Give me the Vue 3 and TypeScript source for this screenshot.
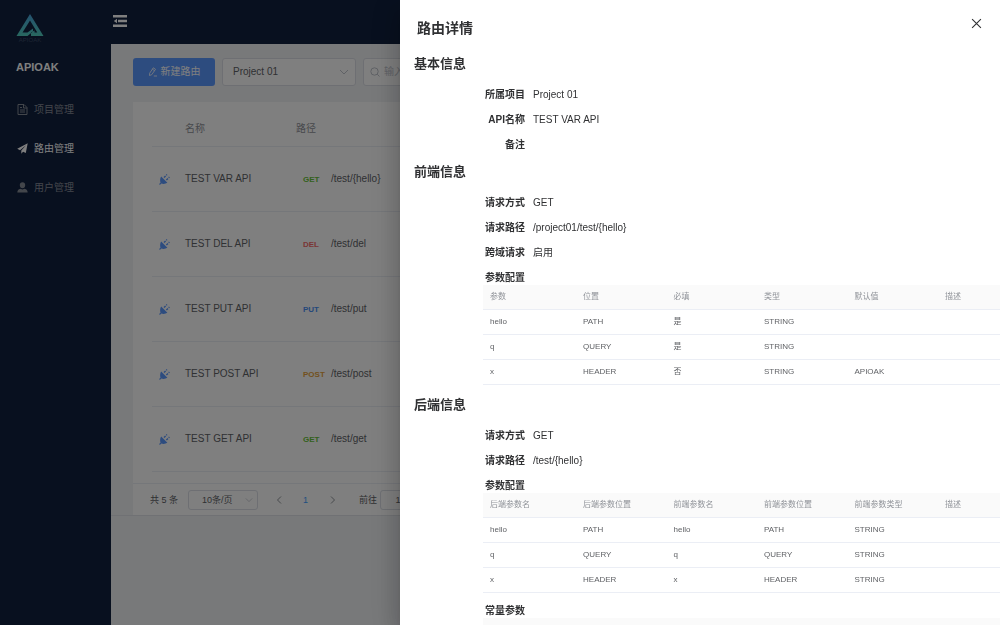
<script setup lang="ts">
import { ref } from 'vue'

interface MenuItem { label: string; icon: 'doc' | 'plane' | 'user'; active: boolean }
interface Route { name: string; method: string; path: string }
interface Field { label: string; value: string }

const menu: MenuItem[] = [
  { label: '项目管理', icon: 'doc', active: false },
  { label: '路由管理', icon: 'plane', active: true },
  { label: '用户管理', icon: 'user', active: false },
]

const routes: Route[] = [
  { name: 'TEST VAR API', method: 'GET', path: '/test/{hello}' },
  { name: 'TEST DEL API', method: 'DEL', path: '/test/del' },
  { name: 'TEST PUT API', method: 'PUT', path: '/test/put' },
  { name: 'TEST POST API', method: 'POST', path: '/test/post' },
  { name: 'TEST GET API', method: 'GET', path: '/test/get' },
]

const basic: Field[] = [
  { label: '所属项目', value: 'Project 01' },
  { label: 'API名称', value: 'TEST VAR API' },
  { label: '备注', value: '' },
]
const front: Field[] = [
  { label: '请求方式', value: 'GET' },
  { label: '请求路径', value: '/project01/test/{hello}' },
  { label: '跨域请求', value: '启用' },
]
const back: Field[] = [
  { label: '请求方式', value: 'GET' },
  { label: '请求路径', value: '/test/{hello}' },
]

const frontHead = ['参数', '位置', '必填', '类型', '默认值', '描述']
const frontRows = [
  ['hello', 'PATH', '是', 'STRING', '', ''],
  ['q', 'QUERY', '是', 'STRING', '', ''],
  ['x', 'HEADER', '否', 'STRING', 'APIOAK', ''],
]
const backHead = ['后端参数名', '后端参数位置', '前端参数名', '前端参数位置', '前端参数类型', '描述']
const backRows = [
  ['hello', 'PATH', 'hello', 'PATH', 'STRING', ''],
  ['q', 'QUERY', 'q', 'QUERY', 'STRING', ''],
  ['x', 'HEADER', 'x', 'HEADER', 'STRING', ''],
]

const project = ref('Project 01')
const pageSize = ref('10条/页')
const jump = ref('1')
const keyword = ref('')
const open = ref(true)
</script>

<template>
  <div class="app">
    <aside class="sidebar">
      <svg class="logo" viewBox="0 0 28 30" aria-hidden="true">
        <defs>
          <linearGradient id="lg" x1="0" y1="0" x2="0" y2="1">
            <stop offset="0" stop-color="#4aa6e0" />
            <stop offset="1" stop-color="#52d0c0" />
          </linearGradient>
        </defs>
        <path
          fill="url(#lg)" fill-rule="evenodd"
          d="M14 1 L27.500 23 H15 V19.500 L18.500 17.500 V19.500 H21.300 L14 7.500 L6.500 19.500 H11.500 L17 15.500 V18.500 L11.500 23 H.5 Z"
        />
        <text x="14" y="29" text-anchor="middle" font-size="6" fill="#3b4b68">APIOAK</text>
      </svg>
      <strong class="brand">APIOAK</strong>
      <nav class="menu">
        <a v-for="m in menu" :key="m.label" href="#" class="menu-item" :class="{ active: m.active }">
          <svg v-if="m.icon === 'doc'" viewBox="0 0 11 11" fill="none" stroke="currentColor">
            <path d="M1 .5 H7 L10 3.500 V10.500 H1 Z M6.500 .5 V4 H10 M3 3.500 H5 M3 6 H8 M3 8 H8" />
          </svg>
          <svg v-else-if="m.icon === 'plane'" viewBox="0 0 11 11" fill="currentColor">
            <path d="M10.700 .3 L.2 5.800 L3 7.200 L9 2.200 L4.300 7.600 V10.800 L6.100 8.700 L8.800 9.900 Z" />
          </svg>
          <svg v-else viewBox="0 0 11 11" fill="currentColor">
            <path d="M5.500 .3 C7.200 .3 8.300 1.600 8.200 3.200 C8.100 4.800 7.200 6.300 5.500 6.300 C3.800 6.300 2.900 4.800 2.800 3.200 C2.700 1.600 3.800 .3 5.500 .3 Z M3.500 6.700 L5.500 7.600 L7.500 6.700 C9.800 7.200 10.600 8.300 10.700 10.600 H.3 C.4 8.300 1.200 7.200 3.500 6.700 Z" />
          </svg>
          <span>{{ m.label }}</span>
        </a>
      </nav>
    </aside>

    <div class="main">
      <header class="topbar">
        <button class="fold" type="button" aria-label="收起菜单">
          <svg viewBox="0 0 14 12" fill="currentColor">
            <path d="M0 0 H14 V2.500 H0 Z M5 4.800 H14 V7.200 H5 Z M0 9.500 H14 V12 H0 Z M.8 6 L4 3.700 V8.300 Z" />
          </svg>
        </button>
      </header>

      <main class="content">
        <div class="toolbar">
          <button class="primary" type="button">
            <svg viewBox="0 0 10 10" fill="none" stroke="currentColor" stroke-width=".8">
              <path d="M1.500 8.500 L1.600 6.300 L5.300 .8 L7.500 2.300 L3.700 7.700 Z M4.400 2.200 L6.500 3.700 M5.800 9 H9" />
            </svg>
            <span>新建路由</span>
          </button>
          <span class="select project">
            <select v-model="project" aria-label="项目"><option>Project 01</option></select>
            <svg viewBox="0 0 10 10" fill="none" stroke="currentColor"><path d="M1 3 L5 7 L9 3" /></svg>
          </span>
          <label class="search">
            <svg viewBox="0 0 10 10" fill="none" stroke="currentColor"><circle cx="4.500" cy="4.500" r="3.700" /><path d="M7.200 7.200 L9.500 9.500" /></svg>
            <input v-model="keyword" type="text" placeholder="输入" aria-label="搜索">
          </label>
        </div>

        <section class="card">
          <table class="routes">
            <thead>
              <tr><th class="c-icon"></th><th class="c-name">名称</th><th>路径</th></tr>
            </thead>
            <tbody>
              <tr v-for="r in routes" :key="r.name">
                <td class="c-icon">
                  <svg viewBox="0 0 11 11" fill="none" stroke="currentColor">
                    <path fill="currentColor" stroke="none" d="M2.200 2.600 L8.400 8.800 C6.800 9.900 4.200 10.200 2.300 9.500 L.9 10.900 L.1 10.100 L1.500 8.700 C.8 6.700 1.100 4.200 2.200 2.600 Z" />
                    <path stroke-width="1.400" d="M5 3.600 L6.600 2 M7.400 6 L9 4.400 M7.300 1.300 L8 .6 M9.700 3.700 L10.400 3" />
                  </svg>
                </td>
                <td class="c-name">{{ r.name }}</td>
                <td><span class="method" :class="r.method.toLowerCase()">{{ r.method }}</span>{{ r.path }}</td>
              </tr>
            </tbody>
          </table>
          <footer class="pager">
            <span>共 5 条</span>
            <span class="select size">
              <select v-model="pageSize" aria-label="每页条数"><option>10条/页</option></select>
              <svg viewBox="0 0 10 10" fill="none" stroke="currentColor"><path d="M1 3 L5 7 L9 3" /></svg>
            </span>
            <button type="button" class="step" aria-label="上一页">
              <svg viewBox="0 0 10 10" fill="none" stroke="currentColor"><path d="M7 1.500 L3.500 5 L7 8.500" /></svg>
            </button>
            <button type="button" class="step current">1</button>
            <button type="button" class="step" aria-label="下一页">
              <svg viewBox="0 0 10 10" fill="none" stroke="currentColor"><path d="M3 1.500 L6.500 5 L3 8.500" /></svg>
            </button>
            <label class="jump">前往<input v-model="jump" type="text"></label>
          </footer>
        </section>
      </main>
    </div>

    <div v-if="open" class="mask">
      <section class="drawer" role="dialog" aria-labelledby="drawer-title">
        <header class="drawer-head">
          <h1 id="drawer-title">路由详情</h1>
          <button type="button" class="close" aria-label="关闭" @click="open = false">
            <svg viewBox="0 0 10 10" fill="none" stroke="currentColor"><path d="M1 1 L9 9 M9 1 L1 9" /></svg>
          </button>
        </header>

        <div class="drawer-body">
          <h2>基本信息</h2>
          <dl v-for="f in basic" :key="f.label" class="field"><dt>{{ f.label }}</dt><dd>{{ f.value }}</dd></dl>

          <h2>前端信息</h2>
          <dl v-for="f in front" :key="f.label" class="field"><dt>{{ f.label }}</dt><dd>{{ f.value }}</dd></dl>
          <h3>参数配置</h3>
          <table class="params">
            <thead><tr><th v-for="h in frontHead" :key="h">{{ h }}</th></tr></thead>
            <tbody>
              <tr v-for="row in frontRows" :key="row[0]"><td v-for="(c, i) in row" :key="i">{{ c }}</td></tr>
            </tbody>
          </table>

          <h2>后端信息</h2>
          <dl v-for="f in back" :key="f.label" class="field"><dt>{{ f.label }}</dt><dd>{{ f.value }}</dd></dl>
          <h3>参数配置</h3>
          <table class="params">
            <thead><tr><th v-for="h in backHead" :key="h">{{ h }}</th></tr></thead>
            <tbody>
              <tr v-for="row in backRows" :key="row[0]"><td v-for="(c, i) in row" :key="i">{{ c }}</td></tr>
            </tbody>
          </table>
          <h3>常量参数</h3>
          <table class="params"><thead><tr><th v-for="n in 6" :key="n"></th></tr></thead></table>
        </div>
      </section>
    </div>
  </div>
</template>

<style>
body {
  margin: 0;
}
</style>

<style scoped>
.app {
  display: flex;
  height: 100vh;
  overflow: hidden;
  font: 10px/14px "Liberation Sans", "Noto Sans CJK SC", sans-serif;
  color: #606266;
}
button, input, select {
  font: inherit;
  color: inherit;
  margin: 0;
  padding: 0;
  border: 0;
  background: none;
}
button {
  cursor: pointer;
}
svg {
  display: block;
  flex: none;
}

.sidebar {
  display: flex;
  flex-direction: column;
  flex: none;
  width: 111px;
  background: #10203e;
}
.logo {
  width: 28px;
  height: 30px;
  margin: 13px 0 0 16px;
}
.brand {
  margin: 17px 0 0 16px;
  font-size: 11px;
  color: #fff;
}
.menu {
  display: flex;
  flex-direction: column;
  margin-top: 16px;
}
.menu-item {
  display: flex;
  align-items: center;
  gap: 6px;
  height: 39px;
  padding-left: 17px;
  color: #878c97;
  text-decoration: none;
}
.menu-item.active {
  color: #fff;
}
.menu-item svg {
  width: 11px;
  height: 11px;
}

.main {
  display: flex;
  flex-direction: column;
  flex: 1;
  min-width: 0;
  background: #f0f2f5;
}
.topbar {
  flex: none;
  height: 44px;
  background: #10203e;
}
.fold {
  display: block;
  padding: 15px 2px;
  color: #fff;
}
.fold svg {
  width: 14px;
  height: 12px;
}
.content {
  padding: 14px 22px 0;
  border-bottom: 1px solid #e0e3e8;
}
.toolbar {
  display: flex;
  gap: 7px;
  margin-bottom: 16px;
}
.primary {
  display: flex;
  align-items: center;
  justify-content: center;
  gap: 3px;
  width: 82px;
  height: 28px;
  border-radius: 3px;
  background: #5b98ff;
  color: #fff;
}
.primary svg {
  width: 10px;
  height: 10px;
}
.select {
  display: flex;
  align-items: center;
  box-sizing: border-box;
  border: 1px solid #dcdfe6;
  border-radius: 3px;
  background: #fff;
}
.select select {
  flex: 1;
  min-width: 0;
  height: 100%;
  appearance: none;
}
.select svg {
  width: 10px;
  height: 10px;
  margin-right: 6px;
  color: #c0c4cc;
}
.project {
  width: 134px;
  height: 28px;
  padding-left: 10px;
}
.search {
  display: flex;
  align-items: center;
  gap: 4px;
  box-sizing: border-box;
  width: 160px;
  height: 28px;
  padding-left: 6px;
  border: 1px solid #dcdfe6;
  border-radius: 3px;
  background: #fff;
  color: #c0c4cc;
}
.search svg {
  width: 10px;
  height: 10px;
}
.search input {
  width: 100px;
  outline: none;
}
.search input::placeholder {
  color: #c0c4cc;
}

.card {
  background: #fff;
}
.routes {
  width: calc(100% - 38px);
  margin: 0 19px 11px;
  border-spacing: 0;
  table-layout: fixed;
}
.routes th, .routes td {
  box-sizing: border-box;
  height: 65px;
  padding: 0 7px;
  border-bottom: 1px solid #ebeef5;
  text-align: left;
  font-weight: 400;
}
.routes th {
  height: 45px;
  padding-top: 10px;
  color: #909399;
}
.routes .c-icon {
  width: 26px;
}
.routes .c-name {
  width: 111px;
}
.routes svg {
  width: 11px;
  height: 11px;
  color: #5b98ff;
}
.method {
  display: inline-block;
  width: 28px;
  padding-left: 7px;
  font-size: 8px;
  font-weight: 700;
}
.get { color: #67c23a; }
.del { color: #f56c6c; }
.put { color: #4a90f5; }
.post { color: #e6a23c; }

.pager {
  display: flex;
  align-items: center;
  height: 31px;
  padding-left: 17px;
  border-top: 1px solid #ebeef5;
  font-size: 9px;
}
.size {
  width: 70px;
  height: 20px;
  margin: 0 7px 0 10px;
  padding-left: 13px;
}
.size svg {
  width: 8px;
  height: 8px;
  margin-right: 4px;
}
.step {
  display: flex;
  align-items: center;
  justify-content: center;
  width: 27px;
  height: 20px;
  flex: none;
}
.step svg {
  width: 10px;
  height: 10px;
  color: #909399;
}
.current {
  color: #409eff;
}
.jump {
  display: flex;
  align-items: center;
  gap: 3px;
  margin-left: 13px;
}
.jump input {
  box-sizing: border-box;
  width: 36px;
  height: 20px;
  border: 1px solid #dcdfe6;
  border-radius: 3px;
  text-align: center;
}

.mask {
  position: fixed;
  inset: 0;
  display: flex;
  justify-content: flex-end;
  background: rgba(0, 0, 0, 0.5);
}
.drawer {
  width: 60%;
  overflow: hidden;
  background: #fff;
  color: #303133;
  box-shadow: 0 8px 10px -5px rgba(0, 0, 0, 0.2), 0 16px 24px 2px rgba(0, 0, 0, 0.14), 0 6px 30px 5px rgba(0, 0, 0, 0.12);
}
.drawer-head {
  display: flex;
  justify-content: space-between;
  align-items: flex-start;
  height: 49px;
  padding: 0 18px 0 17px;
}
h1, h2, h3 {
  margin: 0;
  font-weight: 700;
}
h1 {
  padding-top: 18px;
  font-size: 14px;
  line-height: 20px;
}
.close {
  margin-top: 18px;
  color: #303133;
}
.close svg {
  width: 11px;
  height: 11px;
}
.drawer-body {
  padding-left: 14px;
}
h2 {
  margin-bottom: 3px;
  font-size: 13px;
  line-height: 30px;
}
.field {
  display: flex;
  gap: 8px;
  height: 25px;
  margin: 0;
  line-height: 25px;
}
.field dt {
  width: 111px;
  text-align: right;
  font-weight: 700;
}
.field dd {
  margin: 0;
}
h3 {
  width: 111px;
  height: 20px;
  font-size: 10px;
  line-height: 25px;
  text-align: right;
}
.params {
  width: calc(100% - 69px);
  margin: 0 0 5px 69px;
  border-spacing: 0;
  table-layout: fixed;
  font-size: 8px;
  line-height: 12px;
  color: #606266;
}
.params th, .params td {
  box-sizing: border-box;
  width: 17.5%;
  height: 25px;
  padding: 0 7px;
  border-bottom: 1px solid #ebeef5;
  text-align: left;
  font-weight: 400;
}
.params th {
  background: #fafafa;
  color: #909399;
}
.params th:first-child {
  width: 18%;
}
.params th:last-child {
  width: 12%;
}
</style>
